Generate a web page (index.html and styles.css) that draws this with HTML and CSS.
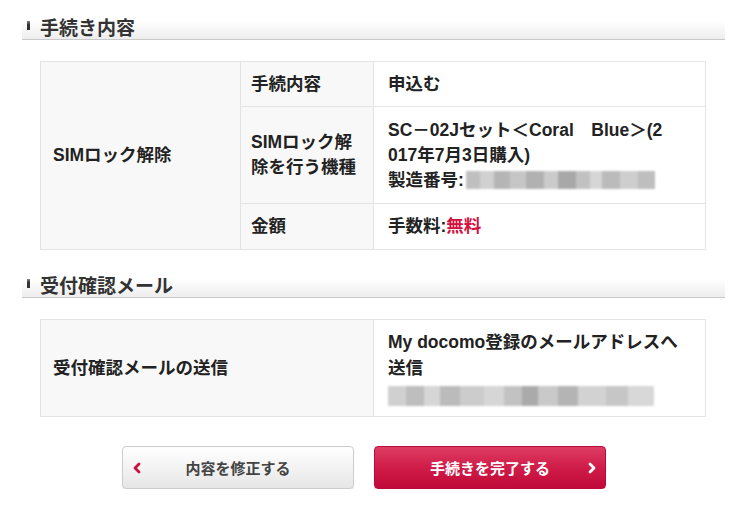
FILE: index.html
```html
<!DOCTYPE html>
<html lang="ja">
<head>
<meta charset="utf-8">
<link rel="stylesheet" href="styles.css">
</head>
<body>
<div class="page">
  <h2 class="sec-title">手続き内容</h2>
  <table class="info info-proc">
    <colgroup><col class="c1"><col class="c2"><col class="c3"></colgroup>
    <tr class="r1">
      <th rowspan="3" class="main">SIMロック解除</th>
      <th>手続内容</th>
      <td>申込む</td>
    </tr>
    <tr class="r2">
      <th>SIMロック解<br>除を行う機種</th>
      <td><span class="nw">SC－02Jセット＜Coral　Blue＞(2</span><br>017年7月3日購入)<br><span class="serial">製造番号:<span class="blur blur-a"></span></span></td>
    </tr>
    <tr class="r3">
      <th>金額</th>
      <td>手数料:<span class="red">無料</span></td>
    </tr>
  </table>

  <h2 class="sec-title sec-title-2">受付確認メール</h2>
  <table class="info info-mail">
    <colgroup><col class="m1"><col class="m2"></colgroup>
    <tr class="r2">
      <th class="main">受付確認メールの送信</th>
      <td><span class="nw">My docomo登録のメールアドレスへ</span><br>送信<br><span class="blur blur-b"></span></td>
    </tr>
  </table>

  <div class="actions">
    <a class="btn btn-back">
      <svg class="chev" width="10" height="12" viewBox="0 0 10 12"><polyline points="7,2 3,6 7,10" fill="none" stroke="#c8103e" stroke-width="2.8" stroke-linecap="round" stroke-linejoin="round"/></svg>
      <span class="btn-label">内容を修正する</span>
      <span></span>
    </a>
    <a class="btn btn-next">
      <span></span>
      <span class="btn-label">手続きを完了する</span>
      <svg class="chev chev-r" width="10" height="12" viewBox="0 0 10 12"><polyline points="3,2 7,6 3,10" fill="none" stroke="#ffffff" stroke-width="2.8" stroke-linecap="round" stroke-linejoin="round"/></svg>
    </a>
  </div>
</div>
</body>
</html>
```

FILE: styles.css
```css
* { box-sizing: border-box; }
html, body { margin: 0; padding: 0; background: #fff; }
body {
  font-family: "Liberation Sans", "Noto Sans CJK JP", "Noto Sans", sans-serif;
  color: #222;
}
.page {
  width: 750px;
  padding: 15px 25px 0 22px;
}
.sec-title {
  margin: 0;
  height: 25px;
  display: flex;
  align-items: center;
  padding-left: 5px;
  padding-top: 3px;
  font-size: 19px;
  font-weight: 700;
  line-height: 22px;
  color: #333;
  border-bottom: 1px solid #c9c9c9;
  background: linear-gradient(to bottom, #ffffff 0%, #ffffff 25%, #ededed 100%);
}
.sec-title::before {
  content: "";
  display: block;
  width: 3px;
  height: 9px;
  margin-right: 10px;
  margin-top: -6px;
  background: linear-gradient(to bottom, #888 0%, #333 40%, #333 100%);
}
.sec-title-2 { margin-top: 23px; }

.info {
  margin: 21px 20px 0 18px;
  width: 665px;
  border-collapse: collapse;
  table-layout: fixed;
  font-size: 17.5px;
  font-weight: 700;
  line-height: 25px;
}
.info th, .info td {
  border: 1px solid #e4e4e4;
  text-align: left;
  vertical-align: middle;
  font-weight: 700;
}
.info th {
  background: #f8f8f8;
  padding: 0 6px 0 10px;
}
.info th.main { padding-left: 12px; }
.info td {
  background: #fff;
  padding: 0 6px 0 14px;
}
.c1 { width: 200px; }
.c2 { width: 133px; }
.c3 { width: 332px; }
.m1 { width: 333px; }
.m2 { width: 332px; }
.info-proc .r1 { height: 45px; }
.info-proc .r2 { height: 97px; }
.info-proc .r3 { height: 46px; }
.info-mail .r2 { height: 97px; }
.info-mail td { line-height: 26px; }

.nw { white-space: nowrap; }
.red { color: #d2123f; }
.serial { display: inline-flex; align-items: center; }
.blur {
  display: inline-block;
  height: 18px;
  vertical-align: middle;
  filter: blur(1.3px);
  opacity: 0.85;
}
.blur-a {
  width: 189px;
  margin-left: 2px;
  background:
    linear-gradient(90deg,
      #b5b5b5 0, #b5b5b5 14px, #c9c9c9 14px, #c9c9c9 28px,
      #a9a9a9 28px, #a9a9a9 44px, #bdbdbd 44px, #bdbdbd 60px,
      #a4a4a4 60px, #a4a4a4 78px, #c3c3c3 78px, #c3c3c3 92px,
      #9a9a9a 92px, #9a9a9a 110px, #b7b7b7 110px, #b7b7b7 124px,
      #cfcfcf 124px, #cfcfcf 136px, #b0b0b0 136px, #b0b0b0 154px,
      #c6c6c6 154px, #c6c6c6 172px, #b3b3b3 172px);
}
.blur-b {
  width: 266px;
  height: 20px;
  margin-top: 2px;
  background:
    linear-gradient(90deg,
      #c8c8c8 0, #c8c8c8 18px, #b3b3b3 18px, #b3b3b3 36px,
      #cfcfcf 36px, #cfcfcf 52px, #b0b0b0 52px, #b0b0b0 72px,
      #c4c4c4 72px, #c4c4c4 96px, #d0d0d0 96px, #d0d0d0 116px,
      #b8b8b8 116px, #b8b8b8 134px, #9c9c9c 134px, #9c9c9c 150px,
      #c0c0c0 150px, #c0c0c0 170px, #a8a8a8 170px, #a8a8a8 190px,
      #cbcbcb 190px, #cbcbcb 218px, #bdbdbd 218px, #bdbdbd 240px,
      #d2d2d2 240px);
}

.actions {
  display: flex;
  gap: 20px;
  margin: 29px 0 0 100px;
}
.btn {
  width: 232px;
  height: 43px;
  display: grid;
  grid-template-columns: 30px 1fr 30px;
  align-items: center;
  border-radius: 4px;
  font-family: "Noto Sans CJK JP", sans-serif;
  font-size: 15px;
  font-weight: 700;
  text-decoration: none;
}
.btn-label { text-align: center; }
.btn-back {
  color: #444;
  background: linear-gradient(to bottom, #ffffff 0%, #f3f3f3 50%, #e6e6e6 100%);
  border: 1px solid #cdcdcd;
  box-shadow: 0 1px 1px rgba(0,0,0,0.12);
}
.btn-back .chev { margin-left: 9px; }
.btn-next {
  color: #fff;
  background: linear-gradient(to bottom, #dd3d63 0%, #d01c48 50%, #c00a39 100%);
  border: 1px solid #b80b3a;
  box-shadow: 0 1px 1px rgba(0,0,0,0.15);
}
.btn-next .chev-r { justify-self: end; margin-right: 8px; }
```
